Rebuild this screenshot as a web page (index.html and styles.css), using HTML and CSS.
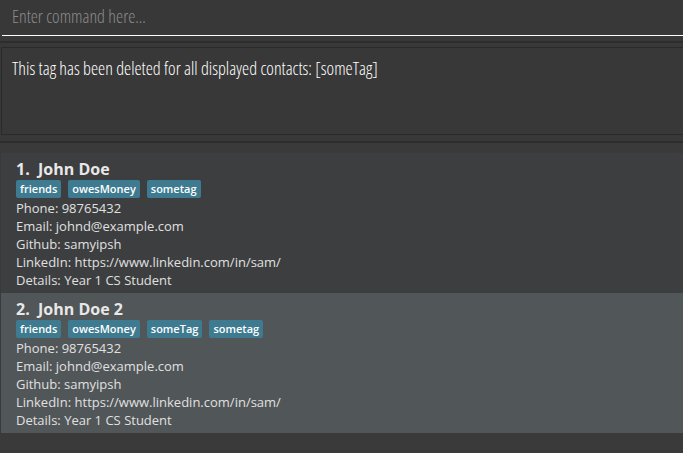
FILE: index.html
```html
<!DOCTYPE html>
<html>
<head>
<meta charset="utf-8">
<link rel="stylesheet" href="styles.css">
</head>
<body>
<div class="app">
  <div class="command-pane">
    <div class="command-box">
      <span class="placeholder">Enter command here...</span>
    </div>
  </div>
  <div class="result-pane">
    <div class="result-box"><span class="result-text">This tag has been deleted for all displayed contacts: [someTag]</span></div>
  </div>
  <div class="list-pane">
    <div class="card even">
      <div class="name">1.&nbsp;&nbsp;John Doe</div>
      <div class="tags">
        <span class="tag">friends</span>
        <span class="tag">owesMoney</span>
        <span class="tag">sometag</span>
      </div>
      <div class="field">Phone: 98765432</div>
      <div class="field">Email: johnd@example.com</div>
      <div class="field">Github: samyipsh</div>
      <div class="field">LinkedIn: https://www.linkedin.com/in/sam/</div>
      <div class="field">Details: Year 1 CS Student</div>
    </div>
    <div class="card odd">
      <div class="name">2.&nbsp;&nbsp;John Doe 2</div>
      <div class="tags">
        <span class="tag">friends</span>
        <span class="tag">owesMoney</span>
        <span class="tag">someTag</span>
        <span class="tag">sometag</span>
      </div>
      <div class="field">Phone: 98765432</div>
      <div class="field">Email: johnd@example.com</div>
      <div class="field">Github: samyipsh</div>
      <div class="field">LinkedIn: https://www.linkedin.com/in/sam/</div>
      <div class="field">Details: Year 1 CS Student</div>
    </div>
  </div>
</div>
</body>
</html>
```

FILE: styles.css
```css
html, body {
  margin: 0;
  padding: 0;
  background: #383838;
  font-family: "Open Sans", "Noto Sans", sans-serif;
  color: #ffffff;
}
.app {
  width: 683px;
  height: 453px;
  display: flex;
  flex-direction: column;
  overflow: hidden;
}
.command-pane {
  height: 41px;
  box-sizing: border-box;
}
.command-box {
  margin-left: 2px;
  height: 36px;
  box-sizing: border-box;
  border-bottom: 1px solid #ffffff;
  padding: 4px 0 0 10px;
}
.placeholder {
  font-size: 18px;
  font-weight: 300;
  font-stretch: 75%;
  color: #8b8b8b;
  line-height: 24px;
}
.result-pane {
  border-top: 2px solid #2d2d2d;
  padding: 4px 0 6px 0;
}
.result-box {
  height: 88px;
  box-sizing: border-box;
  margin-left: 1px;
  border: 1px solid #2a2a2a;
  border-right: none;
  padding: 8px 0 0 10px;
  font-size: 18px;
  line-height: 24px;
  color: #ffffff;
}
.result-text {
  font-weight: 300;
  font-stretch: 75%;
}
.list-pane {
  flex: 1;
  border-top: 2px solid #2d2d2d;
  padding-top: 10px;
  background: #3a3a3a;
}
.card {
  height: 140px;
  box-sizing: border-box;
  margin-left: 1px;
  padding: 5px 0 0 15px;
  color: #e0e0e0;
}
.card.even { background: #3c3e3f; }
.card.odd { background: #515658; }
.name {
  font-size: 16px;
  font-weight: 700;
  line-height: 22px;
  color: #e8e8e8;
}
.tags {
  display: flex;
  gap: 7px;
  margin: 0 0 1px 0;
  height: 18px;
}
.tag {
  background: #3e7b91;
  color: #ffffff;
  font-size: 11px;
  font-weight: 600;
  line-height: 17px;
  padding: 0 4px;
  border-radius: 2px;
}
.field {
  font-size: 13px;
  line-height: 18px;
}
```
